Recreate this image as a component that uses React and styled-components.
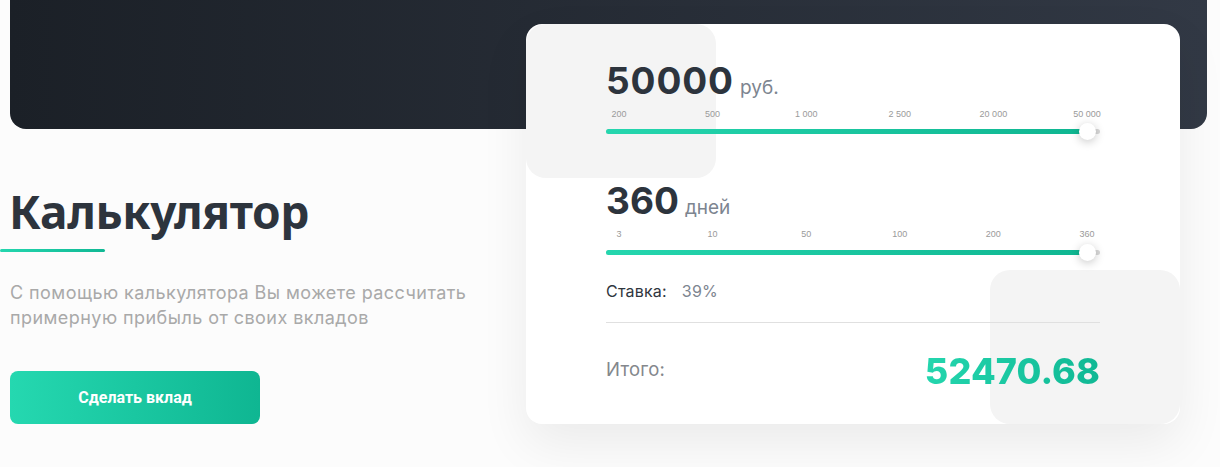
import React from "react";
import styled, { createGlobalStyle } from "styled-components";

const Global = createGlobalStyle`
  html, body { margin: 0; padding: 0; background: #fcfcfc; }
  body { width: 1220px; height: 467px; overflow: hidden; }
`;
const Page = styled.div`
  width: 1220px;
  height: 467px;
  overflow: hidden;
  background: #fcfcfc;
  font-family: "Inter", "Liberation Sans", sans-serif;
`;
const Banner = styled.div`
  height: 129px;
  margin: 0 13px 0 10px;
  border-radius: 0 0 16px 16px;
  background: linear-gradient(90deg, #1b2027 0%, #323945 100%);
`;
const Content = styled.div`
  display: flex;
  margin-top: -105px;
  padding-left: 10px;
`;
const Intro = styled.section`
  width: 516px;
  flex: none;
  padding-top: 155px;
`;
const Title = styled.h1`
  margin: 0 0 0 -1px;
  font: 700 46px/64px "Noto Sans", "Open Sans", sans-serif;
  color: #2d343d;
  letter-spacing: -0.35px;
`;
const Underline = styled.div`
  width: 105px;
  height: 3px;
  margin: 6px 0 0 -10px;
  border-radius: 2px;
  background: linear-gradient(90deg, #24d6ae, #10b894);
`;
const Lead = styled.p`
  margin: 28px 0 0;
  width: 480px;
  font: 400 18px/25px "Inter", sans-serif;
  letter-spacing: 0.44px;
  color: #a9a9a9;
`;
const CTA = styled.button`
  display: block;
  width: 250px;
  height: 53px;
  margin-top: 41px;
  border: 0;
  border-radius: 8px;
  background: linear-gradient(90deg, #25d8b0, #0fb692);
  color: #fff;
  font: 700 16px "Roboto", sans-serif;
`;
const Card = styled.section`
  position: relative;
  width: 654px;
  height: 400px;
  box-sizing: border-box;
  padding: 37px 80px 0;
  border-radius: 16px;
  background: #fff;
  box-shadow: 0 20px 50px rgba(0, 0, 0, 0.07);
  overflow: hidden;
`;
const Decor = styled.div`
  position: absolute;
  width: 190px;
  height: 154px;
  border-radius: 20px;
  background: #f4f4f4;
  ${(p) => (p.$corner === "tl" ? "left: 0; top: 0;" : "right: 0; bottom: 0;")}
`;
const Layer = styled.div`
  position: relative;
`;
const AmountRow = styled.div`
  display: flex;
  align-items: baseline;
  gap: 6px;
  height: 40px;
  line-height: 40px;
  color: #2d343d;
`;
const Amount = styled.span`
  font: 700 37px/40px "Inter", sans-serif;
  letter-spacing: ${(p) => p.$spacing}px;
`;
const Unit = styled.span`
  font: 400 19px/40px "Inter", sans-serif;
  color: #7d8590;
`;
const Ticks = styled.div`
  display: flex;
  justify-content: space-between;
  padding-top: 7px;
  height: 12px;
`;
const Tick = styled.span`
  display: flex;
  justify-content: center;
  width: 26px;
  white-space: nowrap;
  font: 400 9px/12px "Liberation Sans", sans-serif;
  color: #9a9a9a;
`;
const Track = styled.div`
  position: relative;
  height: 5px;
  margin-top: ${(p) => p.$offset}px;
  border-radius: 3px;
  background: #d8d8d8;
`;
const Fill = styled.div`
  height: 100%;
  width: 97%;
  border-radius: 3px;
  background: linear-gradient(90deg, #25d6ae, #0fb691);
`;
const Thumb = styled.div`
  position: absolute;
  right: 4px;
  top: -6px;
  width: 17px;
  height: 17px;
  border-radius: 50%;
  background: #fff;
  box-shadow: 0 2px 10px rgba(0, 0, 0, 0.22);
`;
const Slider = styled.div`
  margin-bottom: ${(p) => p.$gap}px;
`;
const RateRow = styled.div`
  display: flex;
  gap: 15px;
  font: 400 16px/20px "Inter", sans-serif;
  letter-spacing: 0.2px;
  padding-bottom: 21px;
  border-bottom: 1px solid #e0e0e0;
`;
const RateLabel = styled.span`
  color: #30363e;
`;
const RateValue = styled.span`
  color: #7d8590;
`;
const TotalRow = styled.div`
  display: flex;
  justify-content: space-between;
  align-items: center;
  height: 95px;
`;
const TotalLabel = styled.span`
  font: 400 18.5px/24px "Inter", sans-serif;
  letter-spacing: 0.2px;
  color: #84878c;
  margin-top: -4px;
`;
const TotalValue = styled.span`
  font: 800 36px/44px "Inter", sans-serif;
  letter-spacing: 0.1px;
  background: linear-gradient(90deg, #24d6ae, #10b894);
  -webkit-background-clip: text;
  background-clip: text;
  color: transparent;
`;

const sliders = [
  { value: "50000", unit: "руб.", spacing: 0.9, gap: 47, offset: 9, ticks: ["200", "500", "1 000", "2 500", "20 000", "50 000"] },
  { value: "360", unit: "дней", spacing: 0, gap: 26, offset: 10, ticks: ["3", "10", "50", "100", "200", "360"] },
];

export default function App() {
  return (
    <Page>
      <Global />
      <Banner />
      <Content>
        <Intro>
          <Title>Калькулятор</Title>
          <Underline />
          <Lead>С помощью калькулятора Вы можете рассчитать примерную прибыль от своих вкладов</Lead>
          <CTA>Сделать вклад</CTA>
        </Intro>
        <Card>
          <Decor $corner="tl" />
          <Decor $corner="br" />
          <Layer>
            {sliders.map((s) => (
              <Slider key={s.unit} $gap={s.gap}>
                <AmountRow>
                  <Amount $spacing={s.spacing}>{s.value}</Amount>
                  <Unit>{s.unit}</Unit>
                </AmountRow>
                <Ticks>
                  {s.ticks.map((t) => (
                    <Tick key={t}>{t}</Tick>
                  ))}
                </Ticks>
                <Track $offset={s.offset}>
                  <Fill />
                  <Thumb />
                </Track>
              </Slider>
            ))}
            <RateRow>
              <RateLabel>Ставка:</RateLabel>
              <RateValue>39%</RateValue>
            </RateRow>
            <TotalRow>
              <TotalLabel>Итого:</TotalLabel>
              <TotalValue>52470.68</TotalValue>
            </TotalRow>
          </Layer>
        </Card>
      </Content>
    </Page>
  );
}
